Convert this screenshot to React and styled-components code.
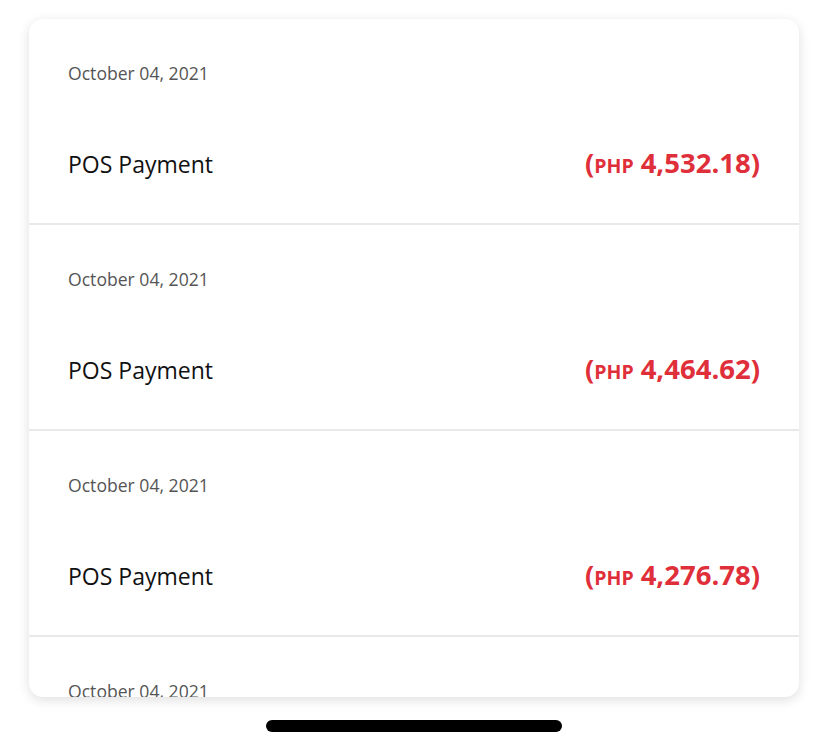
import React from 'react';
import styled, { createGlobalStyle } from 'styled-components';

const GlobalStyle = createGlobalStyle`
  html, body {
    margin: 0;
    padding: 0;
    background: #ffffff;
  }
  body {
    font-family: 'Open Sans', 'Noto Sans', sans-serif;
    -webkit-font-smoothing: antialiased;
  }
`;

const transactions = [
  { date: 'October 04, 2021', title: 'POS Payment', amount: '4,532.18' },
  { date: 'October 04, 2021', title: 'POS Payment', amount: '4,464.62' },
  { date: 'October 04, 2021', title: 'POS Payment', amount: '4,276.78' },
  { date: 'October 04, 2021', title: 'POS Payment', amount: '4,105.40' },
];

const Screen = styled.div`
  width: 828px;
  height: 748px;
  display: flex;
  flex-direction: column;
  align-items: center;
  padding-top: 19px;
  box-sizing: border-box;
  overflow: hidden;
`;

const Card = styled.div`
  width: 770px;
  height: 678px;
  background: #ffffff;
  border-radius: 14px;
  box-shadow: 0 3px 12px rgba(0, 0, 0, 0.13);
  overflow: hidden;
  display: flex;
  flex-direction: column;
  flex-shrink: 0;
`;

const Row = styled.div`
  height: 206px;
  flex-shrink: 0;
  border-bottom: 2px solid #e9e9e9;
  padding: 42px 39px 0;
  box-sizing: border-box;
  display: flex;
  flex-direction: column;
`;

const DateText = styled.div`
  font-size: 17.6px;
  line-height: 24px;
  color: #555555;
`;

const Line = styled.div`
  margin-top: 64px;
  display: flex;
  justify-content: space-between;
  align-items: center;
  height: 30px;
`;

const Title = styled.div`
  font-size: 23px;
  line-height: 30px;
  color: #111111;
`;

const Amount = styled.div`
  color: #df2f3a;
  font-weight: 700;
  font-size: 27.5px;
  line-height: 30px;
  white-space: nowrap;
`;

const Currency = styled.span`
  font-size: 19.5px;
  margin-right: 7px;
`;

const HomeBar = styled.div`
  width: 296px;
  height: 12px;
  border-radius: 6px;
  background: #000000;
  margin-top: 23px;
  flex-shrink: 0;
`;

export default function App() {
  return (
    <>
      <GlobalStyle />
      <Screen>
        <Card>
          {transactions.map((t, i) => (
            <Row key={i}>
              <DateText>{t.date}</DateText>
              <Line>
                <Title>{t.title}</Title>
                <Amount>
                  (<Currency>PHP</Currency>{t.amount})
                </Amount>
              </Line>
            </Row>
          ))}
        </Card>
        <HomeBar />
      </Screen>
    </>
  );
}
